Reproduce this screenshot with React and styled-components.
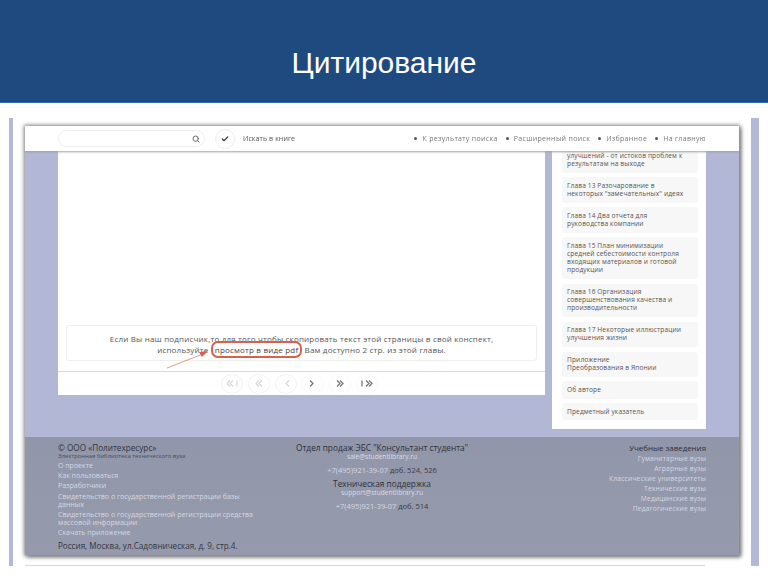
import React from "react";
import styled, { createGlobalStyle } from "styled-components";
import { Search, Check } from "lucide-react";

const Global = createGlobalStyle`
  html, body { margin: 0; padding: 0; background: #fff; }
  body { width: 768px; height: 576px; overflow: hidden; font-family: "Open Sans", "Liberation Sans", sans-serif; }
  * { box-sizing: border-box; }
`;

const Slide = styled.div`width: 768px; height: 576px; display: flex; flex-direction: column; background: #fff;`;
const Banner = styled.header`
  height: 103px; background: #1f4a7f; border-bottom: 1px solid #2a6ba8;
  display: flex; align-items: center; justify-content: center; padding-top: 23px;
`;
const Title = styled.h1`
  margin: 0; color: #fff; font: 400 30px/32px "Liberation Sans", Arial, sans-serif;
`;
const Stage = styled.div`
  display: grid; grid-template-columns: 4px 714px 8px; column-gap: 12px;
  padding: 15px 0 0 9px; filter: blur(0.75px);
`;
const Stripe = styled.div`height: 448px; background: #b3b8d6;`;
const Shot = styled.div`padding-top: 8px; display: flex; flex-direction: column;`;
const Window = styled.div`
  height: 429px; display: flex; flex-direction: column; position: relative;
  background: #b3b7d6; box-shadow: 0 0 4px 1px #8a8a8a, 2px 2px 4px #777;
`;
const BottomRule = styled.div`width: 680px; height: 1px; margin-top: 10px; background: #c9dde4;`;

const Toolbar = styled.div`
  height: 25px; flex: none; background: #fff; display: flex; align-items: center;
  padding: 0 33px; position: relative; z-index: 1; box-shadow: 0 1px 2px #a0a0a0;
`;
const SearchBox = styled.div`
  width: 147px; height: 17px; border: 1px solid #eee; border-radius: 9px;
  display: flex; align-items: center; justify-content: flex-end; padding-right: 4px; color: #666;
`;
const CheckButton = styled.div`
  width: 20px; height: 20px; margin-left: 10px; border: 1px solid #eee; border-radius: 50%;
  display: flex; align-items: center; justify-content: center; color: #444;
`;
const SearchLabel = styled.span`margin-left: 8px; font-size: 7px; color: #555; letter-spacing: .1px;`;
const Nav = styled.nav`margin-left: auto; display: flex; gap: 8px; font-size: 7px; color: #777; letter-spacing: .33px;`;
const NavItem = styled.span`
  display: flex; align-items: center; gap: 5px;
  &::before { content: ""; width: 3px; height: 3px; border-radius: 50%; background: #555; }
`;

const Body = styled.div`flex: 1; min-height: 0; display: flex; padding: 0 33px; gap: 7px; align-items: flex-start;`;
const Reader = styled.div`width: 487px; height: 244px; background: #fff; display: flex; flex-direction: column;`;
const Page = styled.div`flex: 1; display: flex; flex-direction: column; justify-content: flex-end; padding: 0 8px 10px; border-bottom: 1px solid #d8dae2;`;
const Notice = styled.div`
  height: 36px; border: 1px solid #eeeeea; border-radius: 3px; text-align: center; position: relative;
  font-size: 8px; line-height: 10.5px; color: #555; padding-top: 8px; letter-spacing: .19px; white-space: nowrap;
`;
const PdfLink = styled.span`
  border: 2px solid #d9604f; border-radius: 7px; padding: 1px 2px; margin: 0; color: #444; font-weight: 500;
`;
const Arrow = styled.svg`position: absolute; left: 96px; top: 20px;`;
const Pager = styled.div`height: 23px; flex: none; display: flex; justify-content: center; align-items: center; gap: 5px; padding-right: 5px;`;
const PageButton = styled.div`
  width: 22px; height: 20px; border-radius: 50%; border: 1px solid ${p => (p.$off ? "#f4f4f4" : "#fafafa")};
  display: flex; align-items: center; justify-content: center;
  color: ${p => (p.$off ? "#d5d8dc" : "#707070")};
`;

const Sidebar = styled.aside`
  width: 154px; height: 278px; background: #fff; padding: 0 8px 11px 10px;
  display: flex; flex-direction: column; gap: 4.5px;
`;
const Chapter = styled.div`
  background: #f7f7f7; border-radius: 3px; padding: ${p => (p.$cut ? "1px 5px 4.5px" : "4.5px 5px")};
  font-size: 6.6px; line-height: 8.2px; color: #555; letter-spacing: .12px; white-space: pre-line;
`;

const Footer = styled.footer`
  flex: none; height: 118px; padding: 6px 33px 0; display: grid; grid-template-columns: 205px 1fr 205px;
  background: linear-gradient(#9196aa, #969aac); color: #d5d8e2; font-size: 7px;
`;
const LeftCol = styled.div`display: flex; flex-direction: column;`;
const Company = styled.div`font-size: 8.2px; line-height: 10px; color: #33363f;`;
const Tagline = styled.div`font-size: 5.9px; line-height: 7px; margin-bottom: 1px; color: #4a4d5a; white-space: nowrap;`;
const FootLink = styled.div`line-height: 8.2px; padding: 1px 0;`;
const Address = styled.div`margin-top: 2px; font-size: 8.1px; line-height: 10px; color: #33363f; white-space: nowrap;`;
const MiddleCol = styled.div`text-align: center; display: flex; flex-direction: column; align-items: center;`;
const MidHead = styled.div`font-size: 8.3px; line-height: 10px; color: #2e3038; white-space: nowrap; margin-top: ${p => p.$gap || 0}px;`;
const MidMail = styled.div`font-size: 6.6px; line-height: 8px; color: #dadde6;`;
const MidPhone = styled.div`font-size: 7.5px; line-height: 10px; margin-top: 4px; white-space: nowrap; color: #d5d8e2; span { color: #3a3d48; }`;
const RightCol = styled.div`text-align: right;`;
const RightHead = styled.div`font-size: 7.9px; line-height: 10px; color: #2e3038; margin-bottom: 1px;`;
const RightLink = styled.div`font-size: 6.7px; line-height: 9.9px; letter-spacing: .17px;`;

const chapters = [
  "улучшений - от истоков проблем к\nрезультатам на выходе",
  "Глава 13 Разочарование в\nнекоторых \"замечательных\" идеях",
  "Глава 14 Два отчета для\nруководства компании",
  "Глава 15 План минимизации\nсредней себестоимости контроля\nвходящих материалов и готовой\nпродукции",
  "Глава 16 Организация\nсовершенствования качества и\nпроизводительности",
  "Глава 17 Некоторые иллюстрации\nулучшения жизни",
  "Приложение\nПреобразования в Японии",
  "Об авторе",
  "Предметный указатель",
];

const Chevrons = ({ dir = 1, count = 1, bar = false }) => {
  const chev = [];
  for (let i = 0; i < count; i++) {
    const x = dir > 0 ? 4 + i * 3 + (bar ? 2 : 0) : 10 - i * 3 - (bar ? 2 : 0);
    chev.push(<path key={i} d={dir > 0 ? `M${x} 3.5l3 3L${x} 9.5` : `M${x} 3.5L${x - 3} 6.5L${x} 9.5`} />);
  }
  return (
    <svg width="14" height="13" viewBox="0 0 14 13" fill="none" stroke="currentColor" strokeWidth="1.2">
      {chev}
      {bar && <path d={dir > 0 ? "M2 3.5v6" : "M12 3.5v6"} />}
    </svg>
  );
};

export default function App() {
  return (
    <Slide>
      <Global />
      <Banner><Title>Цитирование</Title></Banner>
      <Stage>
        <Stripe />
        <Shot>
          <Window>
            <Toolbar>
              <SearchBox><Search size={8} strokeWidth={3} /></SearchBox>
              <CheckButton><Check size={8} strokeWidth={4} /></CheckButton>
              <SearchLabel>Искать в книге</SearchLabel>
              <Nav>
                <NavItem>К результату поиска</NavItem>
                <NavItem>Расширенный поиск</NavItem>
                <NavItem>Избранное</NavItem>
                <NavItem>На главную</NavItem>
              </Nav>
            </Toolbar>
            <Body>
              <Reader>
                <Page>
                  <Notice>
                    Если Вы наш подписчик,то для того чтобы скопировать текст этой страницы в свой конспект,<br />
                    используйте <PdfLink>просмотр в виде pdf</PdfLink> Вам доступно 2 стр. из этой главы.
                    <Arrow width="50" height="26" viewBox="0 0 50 26" fill="none">
                      <path d="M4 22L40 8" stroke="#d9806f" strokeWidth="0.8" />
                      <path d="M45 5L36 6L39 11Z" fill="#d9604f" />
                    </Arrow>
                  </Notice>
                </Page>
                <Pager>
                  <PageButton $off><Chevrons dir={-1} count={2} bar /></PageButton>
                  <PageButton $off><Chevrons dir={-1} count={2} /></PageButton>
                  <PageButton $off><Chevrons dir={-1} /></PageButton>
                  <PageButton><Chevrons /></PageButton>
                  <PageButton><Chevrons count={2} /></PageButton>
                  <PageButton><Chevrons count={2} bar /></PageButton>
                </Pager>
              </Reader>
              <Sidebar>
                {chapters.map((c, i) => <Chapter key={c} $cut={i === 0}>{c}</Chapter>)}
              </Sidebar>
            </Body>
            <Footer>
              <LeftCol>
                <Company>© ООО «Политехресурс»</Company>
                <Tagline>Электронная библиотека технического вуза</Tagline>
                <FootLink>О проекте</FootLink>
                <FootLink>Как пользоваться</FootLink>
                <FootLink>Разработчики</FootLink>
                <FootLink>Свидетельство о государственной регистрации базы данных</FootLink>
                <FootLink>Свидетельство о государственной регистрации средства массовой информации</FootLink>
                <FootLink>Скачать приложение</FootLink>
                <Address>Россия, Москва, ул.Садовническая, д. 9, стр.4.</Address>
              </LeftCol>
              <MiddleCol>
                <MidHead>Отдел продаж ЭБС "Консультант студента"</MidHead>
                <MidMail>sale@studentlibrary.ru</MidMail>
                <MidPhone>+7(495)921-39-07 <span>доб. 524, 526</span></MidPhone>
                <MidHead $gap={4}>Техническая поддержка</MidHead>
                <MidMail>support@studentlibrary.ru</MidMail>
                <MidPhone>+7(495)921-39-07 <span>доб. 514</span></MidPhone>
              </MiddleCol>
              <RightCol>
                <RightHead>Учебные заведения</RightHead>
                <RightLink>Гуманитарные вузы</RightLink>
                <RightLink>Аграрные вузы</RightLink>
                <RightLink>Классические университеты</RightLink>
                <RightLink>Технические вузы</RightLink>
                <RightLink>Медицинские вузы</RightLink>
                <RightLink>Педагогические вузы</RightLink>
              </RightCol>
            </Footer>
          </Window>
          <BottomRule />
        </Shot>
        <Stripe />
      </Stage>
    </Slide>
  );
}
